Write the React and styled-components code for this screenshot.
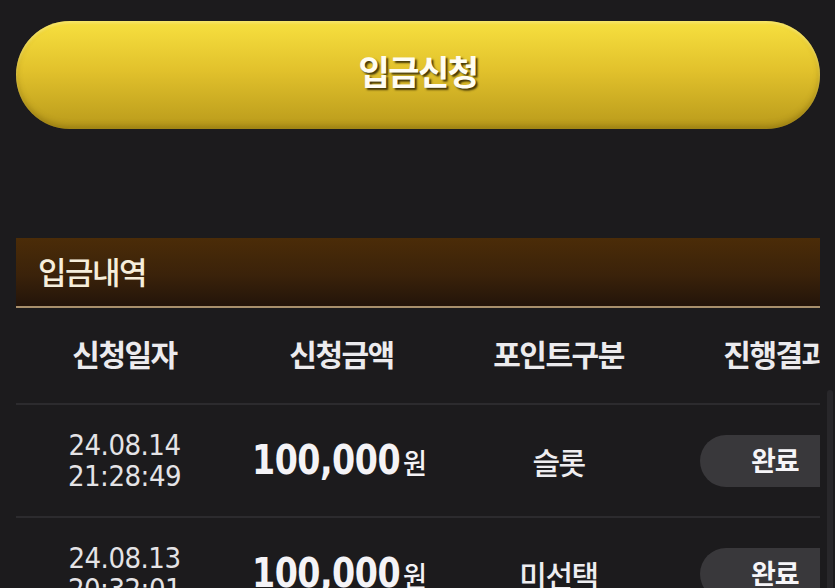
import styled, { createGlobalStyle } from 'styled-components';

const GlobalStyle = createGlobalStyle`
  html, body {
    margin: 0;
    padding: 0;
    background: #1c1b1d;
    overflow: hidden;
  }
  body {
    font-family: "Noto Sans CJK KR", "Noto Sans", sans-serif;
  }
`;

const ROWS = [
  { date: '24.08.14', time: '21:28:49', amount: '100,000', kind: '슬롯', status: '완료' },
  { date: '24.08.13', time: '20:32:01', amount: '100,000', kind: '미선택', status: '완료' },
];

const Page = styled.div`
  position: relative;
  width: 835px;
  height: 588px;
  padding: 21px 15px 0 16px;
  box-sizing: border-box;
  background: #1c1b1d;
  overflow: hidden;
`;

const ScrollTrack = styled.div`
  position: absolute;
  right: 2px;
  top: 390px;
  bottom: 0;
  width: 6px;
  border-radius: 3px 3px 0 0;
  background: #28272a;
`;

const ApplyButton = styled.button`
  display: flex;
  align-items: center;
  justify-content: center;
  width: 100%;
  height: 108px;
  border: none;
  border-radius: 54px;
  background: linear-gradient(180deg, #f7e03f 0%, #e2c22c 45%, #b99a1b 100%);
  box-shadow: inset 0 2px 3px rgba(255, 245, 160, 0.5), inset 0 -3px 6px rgba(90, 70, 0, 0.35);
  font-family: "Noto Sans CJK KR", sans-serif;
  font-size: 34px;
  font-weight: 700;
  letter-spacing: -1.5px;
  color: #fffdf2;
  text-shadow: 2px 2px 2px rgba(40, 30, 0, 0.85);
  padding-bottom: 10px;
`;

const Panel = styled.section`
  margin-top: 109px;
  overflow: hidden;
`;

const PanelHead = styled.div`
  height: 70px;
  display: flex;
  align-items: center;
  padding-left: 22px;
  padding-bottom: 4px;
  box-sizing: border-box;
  background: linear-gradient(180deg, #4b2c08 0%, #3a220a 55%, #23140a 100%);
  border-bottom: 2px solid #a88f6c;
  font-size: 31px;
  font-weight: 500;
  color: #f6eedb;
  letter-spacing: -1.5px;
`;

const Table = styled.div`
  width: 868px;
`;

const Row = styled.div`
  display: grid;
  grid-template-columns: repeat(4, 217px);
  align-items: center;
  height: ${p => p.$head ? '95px' : '111px'};
  border-top: ${p => p.$head ? 'none' : '2px solid #2c2b2e'};
`;

const HeadCell = styled.div`
  text-align: center;
  font-size: 30px;
  font-weight: 700;
  color: #ecebee;
  letter-spacing: -1.5px;
  padding-bottom: 6px;
  white-space: nowrap;
`;

const Cell = styled.div`
  display: flex;
  flex-direction: column;
  align-items: center;
  justify-content: center;
`;

const DateText = styled.div`
  font-family: "DejaVu Sans Condensed", "DejaVu Sans", sans-serif;
  font-size: 29px;
  line-height: 31px;
  color: #e4e3e6;
  letter-spacing: -0.5px;
`;

const Amount = styled.div`
  display: flex;
  align-items: baseline;
  font-family: "DejaVu Sans Condensed", "DejaVu Sans", sans-serif;
  font-weight: 700;
  font-size: 37px;
  color: #f4f3f6;
  letter-spacing: -0.5px;
  padding-right: 4px;
  transform: scaleY(1.1);
`;

const Won = styled.span`
  font-family: "Noto Sans CJK KR", sans-serif;
  font-size: 26px;
  font-weight: 500;
  margin-left: 3px;
  letter-spacing: 0;
`;

const Kind = styled.div`
  font-size: 30px;
  font-weight: 500;
  color: #eeedf0;
  letter-spacing: -1.5px;
`;

const StatusCell = styled.div`
  display: flex;
  justify-content: flex-start;
  padding-left: 33px;
`;

const Badge = styled.div`
  width: 150px;
  height: 52px;
  flex-shrink: 0;
  border-radius: 26px;
  background: #39383b;
  display: flex;
  align-items: center;
  padding-left: 51px;
  padding-bottom: 3px;
  box-sizing: border-box;
  font-size: 27px;
  font-weight: 700;
  color: #f6f5f8;
  letter-spacing: -1px;
`;

const App = () => {
  return (
    <>
      <GlobalStyle />
      <Page>
        <ApplyButton>입금신청</ApplyButton>
        <Panel>
          <PanelHead>입금내역</PanelHead>
          <Table>
            <Row $head>
              <HeadCell>신청일자</HeadCell>
              <HeadCell>신청금액</HeadCell>
              <HeadCell>포인트구분</HeadCell>
              <HeadCell>진행결과</HeadCell>
            </Row>
            {ROWS.map((r, i) => (
              <Row key={i}>
                <Cell>
                  <DateText>{r.date}</DateText>
                  <DateText>{r.time}</DateText>
                </Cell>
                <Cell>
                  <Amount>{r.amount}<Won>원</Won></Amount>
                </Cell>
                <Cell>
                  <Kind>{r.kind}</Kind>
                </Cell>
                <StatusCell>
                  <Badge>{r.status}</Badge>
                </StatusCell>
              </Row>
            ))}
          </Table>
        </Panel>
        <ScrollTrack />
      </Page>
    </>
  );
};

export default App;
